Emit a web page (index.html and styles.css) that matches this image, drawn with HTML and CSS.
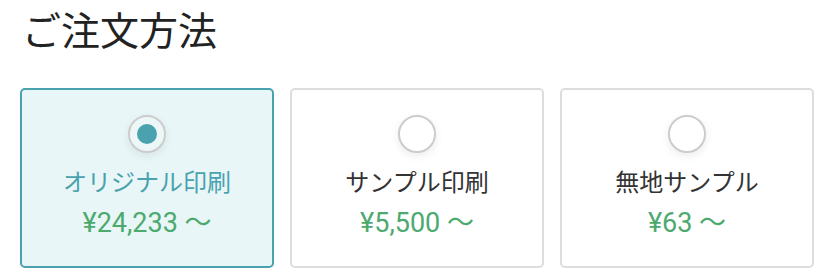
FILE: index.html
```html
<!DOCTYPE html>
<html lang="ja">

<head>
    <meta charset="UTF-8">
    <meta name="viewport" content="width=device-width, initial-scale=1.0">
    <title>ご注文方法</title>
    <link rel="stylesheet" href="styles.css">
</head>

<body>
    <div class="container">
        <h1>ご注文方法</h1>
        <div class="methods">
            <label class="method selected">
                <span class="radio"></span>
                <span class="method-name">オリジナル印刷</span>
                <span class="method-price">¥24,233 〜</span>
            </label>
            <label class="method">
                <span class="radio"></span>
                <span class="method-name">サンプル印刷</span>
                <span class="method-price">¥5,500 〜</span>
            </label>
            <label class="method">
                <span class="radio"></span>
                <span class="method-name">無地サンプル</span>
                <span class="method-price">¥63 〜</span>
            </label>
        </div>
    </div>
</body>

</html>
```

FILE: styles.css
```css
body {
    font-family: Roboto, "Noto Sans CJK JP", sans-serif;
    margin: 0;
    padding: 0;
    background: #fff;
    color: #333;
}

.container {
    padding: 0 20px;
}

h1 {
    margin: 0;
    padding-top: 10px;
    padding-left: 2px;
    font-size: 39px;
    font-weight: 400;
    line-height: 44px;
    color: #222;
}

.methods {
    display: grid;
    grid-template-columns: repeat(3, 1fr);
    gap: 16px;
    margin-top: 34px;
}

.method {
    display: flex;
    flex-direction: column;
    align-items: center;
    height: 180px;
    box-sizing: border-box;
    padding-top: 25px;
    border: 2px solid #ddd;
    border-radius: 5px;
    background: #fff;
    cursor: pointer;
}

.method.selected {
    border-color: #4aa2ae;
    background: #e9f6f7;
}

.radio {
    width: 38px;
    height: 38px;
    box-sizing: border-box;
    border: 2px solid #ccc;
    border-radius: 50%;
    background: #fff;
    box-shadow: 0 3px 8px rgba(0, 0, 0, 0.08);
    display: flex;
    align-items: center;
    justify-content: center;
}

.selected .radio {
    background: #eef7f8;
}

.selected .radio::after {
    content: "";
    width: 20px;
    height: 20px;
    border-radius: 50%;
    background: #4aa2ae;
}

.method-name {
    margin-top: 14px;
    font-size: 24px;
    line-height: 32px;
    color: #333;
}

.selected .method-name {
    color: #4aa2ae;
}

.method-price {
    margin-top: 8px;
    font-size: 27px;
    line-height: 32px;
    color: #4caa6f;
}
```
